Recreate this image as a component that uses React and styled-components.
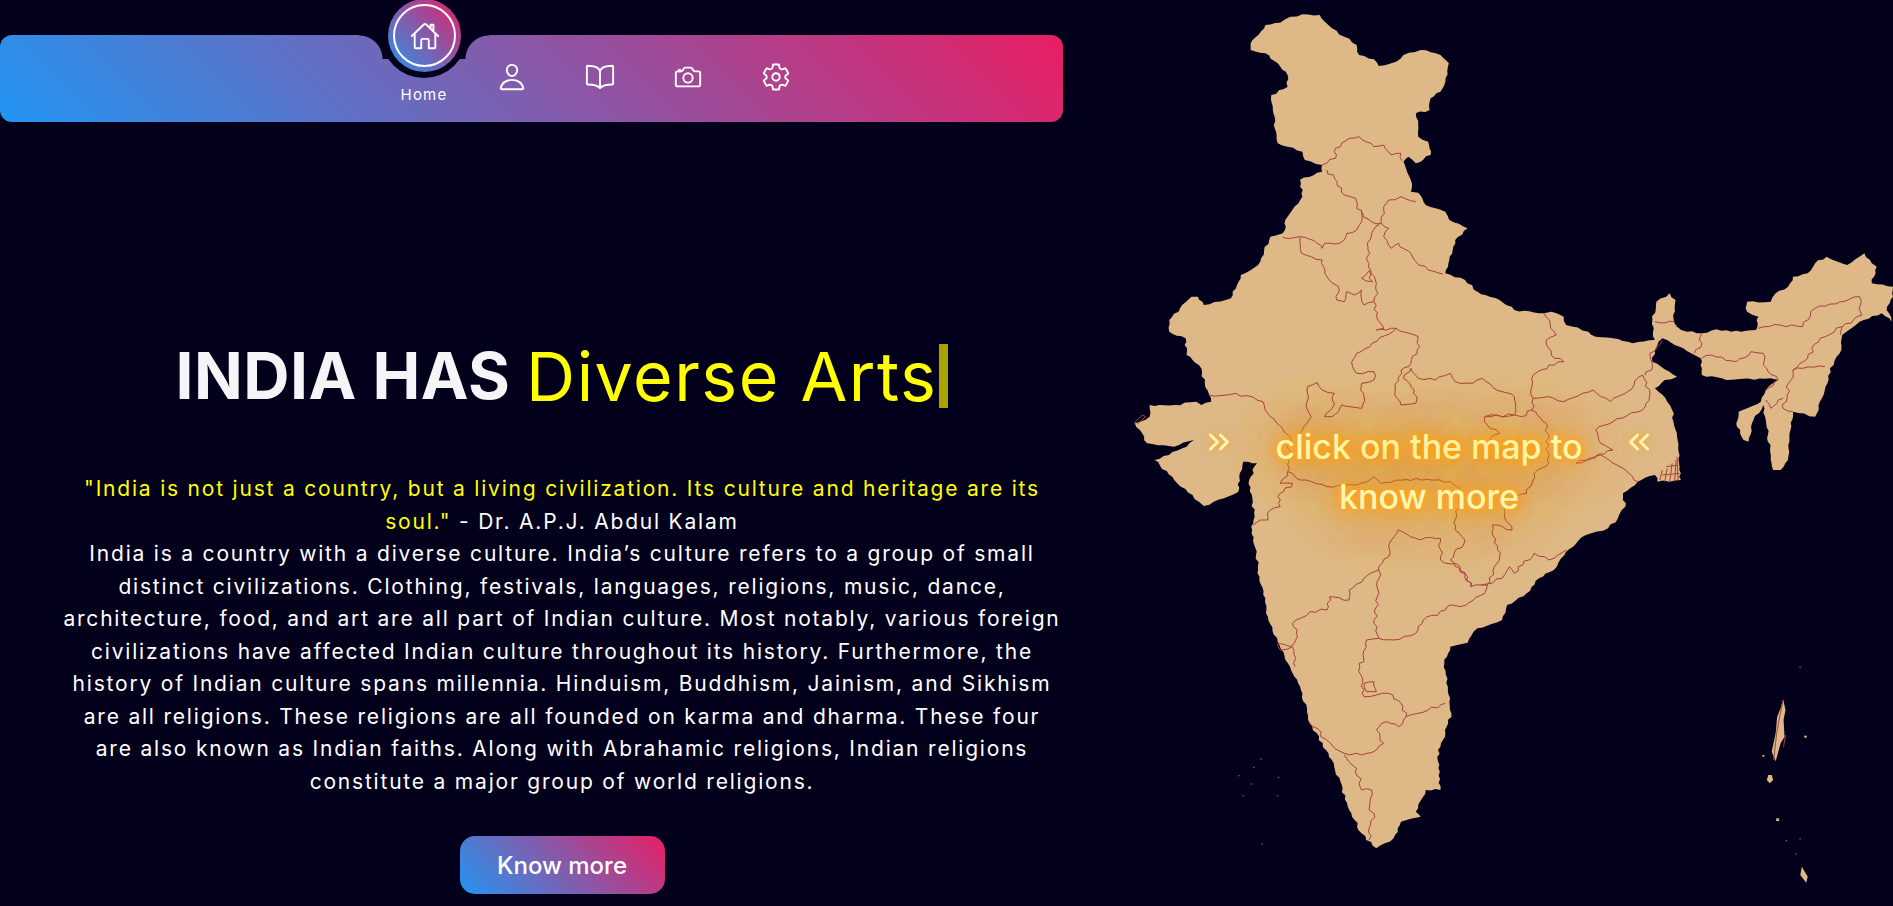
import styled, { createGlobalStyle } from "styled-components";
import {
  IoHomeOutline,
  IoPersonOutline,
  IoBookOutline,
  IoCameraOutline,
  IoSettingsOutline,
} from "react-icons/io5";
import { ChevronsLeft, ChevronsRight } from "lucide-react";

const BG = "#03001c";

const GlobalStyle = createGlobalStyle`
  html, body { margin: 0; padding: 0; background: ${BG}; overflow: hidden; }
  * { box-sizing: border-box; }
`;

const Page = styled.div`
  display: flex;
  width: 1893px;
  height: 906px;
  font-family: Inter, "Liberation Sans", sans-serif;
  color: #fff;
`;

const LeftColumn = styled.div`
  width: 1120px;
  padding-top: 35px;
`;

const Nav = styled.nav`
  position: relative;
  display: flex;
  width: 1063px;
  height: 87px;
  padding-left: 380px;
  border-radius: 12px;
  background: linear-gradient(45deg, #2196f3, #e91e63);
`;

// dark cut-out in the bar under the active item
const Notch = styled.div`
  position: absolute;
  left: 381px;
  top: -43px;
  width: 86px;
  height: 86px;
  border-radius: 50%;
  background: ${BG};
  &::before,
  &::after {
    content: "";
    position: absolute;
    top: 43px;
    width: 30px;
    height: 24px;
  }
  &::before {
    left: -22px;
    background: radial-gradient(circle at 0 100%, transparent 23px, ${BG} 24px);
  }
  &::after {
    right: -22px;
    background: radial-gradient(circle at 100% 100%, transparent 23px, ${BG} 24px);
  }
`;

const HomeBubble = styled.div`
  position: absolute;
  left: 388px;
  top: -36px;
  width: 73px;
  height: 73px;
  display: flex;
  align-items: center;
  justify-content: center;
  border-radius: 50%;
  background: linear-gradient(45deg, #2196f3, #e91e63);
  color: #fff;
  font-size: 30px;
  &::before {
    content: "";
    position: absolute;
    inset: 5px;
    border: 2px solid #fff;
    border-radius: 50%;
  }
`;

const NavItem = styled.div`
  position: relative;
  width: 88px;
  display: flex;
  flex-direction: column;
  align-items: center;
  padding-top: 27px;
  font-size: 30px;
  line-height: 30px;
  color: #fff;
  svg { display: block; }
`;

const NavLabel = styled.span`
  margin-top: 24px;
  font-size: 15px;
  line-height: 18px;
  letter-spacing: 1.2px;
`;

const Hero = styled.section`
  padding: 215px 0 0 4px;
  display: flex;
  flex-direction: column;
  align-items: center;
`;

const Title = styled.h1`
  margin: 0;
  height: 78px;
  display: flex;
  align-items: center;
  font-size: 64px;
  line-height: 78px;
  font-weight: 700;
  letter-spacing: 0.5px;
  color: #f5f5f7;
  white-space: pre;
`;

const Typed = styled.span`
  font-size: 68px;
  font-weight: 400;
  color: #ffff00;
  letter-spacing: 1.5px;
`;

const Cursor = styled.span`
  width: 9px;
  height: 64px;
  margin-left: 2px;
  background: #a8a300;
`;

const Text = styled.p`
  margin: 58px 0 0;
  text-align: center;
  font-size: 21px;
  font-weight: 400;
  line-height: 32.5px;
  letter-spacing: 1.8px;
  color: #fff;
  white-space: nowrap;
`;

const Quote = styled.span`
  color: #ffff00;
`;

const KnowMore = styled.button`
  margin-top: 38px;
  width: 205px;
  height: 58px;
  border: 0;
  border-radius: 15px;
  background: linear-gradient(45deg, #2196f3, #e91e63);
  color: #fff;
  font-family: inherit;
  font-size: 24px;
  font-weight: 500;
`;

const MapPanel = styled.div`
  position: relative;
  width: 773px;
  height: 906px;
`;

const MapDrawing = styled.svg`
  display: block;
  width: 773px;
  height: 906px;
`;

const Hint = styled.div`
  position: absolute;
  left: 82px;
  top: 422px;
  width: 454px;
  display: flex;
  justify-content: space-between;
  align-items: flex-start;
  color: #fff7b0;
  svg {
    display: block;
    margin-top: 3px;
    filter: drop-shadow(0 0 4px #ffa51f);
  }
`;

const HintText = styled.div`
  width: 340px;
  text-align: center;
  font-size: 34px;
  font-weight: 500;
  line-height: 50px;
  text-shadow: 0 0 4px #ffa51f, 0 0 8px #ffa51f, 0 0 14px #ffa51f, 0 0 24px #ffa51f,
    0 0 45px #f09a3a, 0 0 70px #f09a3a, 0 0 90px #f09a3a;
`;

// outline and borders are traced in a 1568x2718 grid, squeezed to the panel
const outline =
  "M265 130 L295 75 L325 68 L335 58 L370 43 L405 45 L430 85 L480 135 L485 165 L515 178 L525 198 L560 185 L575 165 L610 150 L650 165 L667 190 L660 245 L650 275 L630 295 L628 330 L600 340 L605 375 L605 410 L625 425 L630 465 L600 490 L585 470 L575 485 L590 540 L590 575 L605 578 L620 615 L660 635 L668 660 L705 685 L680 720 L668 780 L660 820 L700 840 L725 875 L770 900 L800 930 L860 940 L875 935 L900 950 L905 975 L950 995 L965 1010 L1000 1015 L1040 1030 L1085 1020 L1080 960 L1088 905 L1115 880 L1127 900 L1122 945 L1130 980 L1150 995 L1180 1000 L1210 988 L1240 995 L1290 990 L1295 950 L1272 935 L1272 905 L1320 905 L1330 880 L1355 860 L1365 830 L1395 820 L1410 790 L1433 770 L1475 795 L1510 760 L1525 790 L1535 800 L1525 850 L1568 860 L1568 890 L1555 930 L1565 965 L1545 940 L1500 965 L1465 1005 L1460 1060 L1440 1105 L1435 1150 L1410 1250 L1365 1235 L1360 1290 L1355 1380 L1340 1410 L1325 1410 L1310 1260 L1305 1215 L1285 1260 L1275 1325 L1265 1320 L1250 1270 L1255 1235 L1300 1205 L1310 1170 L1335 1140 L1320 1135 L1230 1140 L1180 1125 L1178 1075 L1165 1065 L1135 1040 L1100 1015 L1085 1050 L1080 1085 L1130 1130 L1105 1140 L1085 1165 L1110 1205 L1120 1230 L1130 1310 L1135 1400 L1138 1440 L1090 1445 L1085 1425 L1050 1445 L1020 1480 L1025 1520 L1010 1555 L990 1585 L945 1605 L905 1655 L880 1710 L850 1735 L825 1780 L785 1815 L775 1860 L725 1885 L705 1928 L670 1940 L658 1990 L665 2060 L672 2140 L660 2200 L645 2250 L650 2370 L620 2370 L600 2435 L610 2450 L570 2465 L555 2515 L520 2545 L490 2500 L465 2430 L430 2280 L385 2170 L370 2080 L345 2000 L320 1925 L300 1850 L283 1730 L268 1590 L272 1540 L262 1440 L278 1390 L250 1385 L243 1420 L240 1475 L170 1518 L160 1505 L110 1440 L70 1380 L135 1340 L150 1320 L110 1340 L55 1330 L45 1300 L30 1270 L60 1250 L60 1215 L110 1215 L155 1205 L165 1215 L185 1205 L160 1095 L135 1065 L133 1015 L100 995 L100 960 L145 890 L158 890 L170 915 L225 895 L245 825 L280 795 L305 710 L330 700 L340 650 L370 590 L365 540 L410 515 L410 495 L375 480 L370 455 L320 430 L310 330 L307 285 L340 260 L340 225 L320 190 L295 160 L265 150 Z";

const islands = [
  "M1345 2098 L1350 2130 L1346 2160 L1348 2210 L1340 2230 L1330 2284 L1322 2255 L1330 2200 L1333 2150 L1340 2125 Z",
  "M1315 2325 L1322 2325 L1325 2340 L1318 2350 L1312 2340 Z",
  "M1383 2600 L1395 2630 L1392 2648 L1380 2625 Z",
  "M1331 2455 h6 v8 h-6 Z",
  "M1388 2207 h5 v6 h-5 Z",
  "M1303 2265 h4 v5 h-4 Z",
];

const borders = [
  "M410 495 L437 475 L437 445 L465 415 L485 410 L515 440 L535 435 L550 465 L570 460 L572 482",
  "M420 510 L440 545 L455 585 L478 595 L480 625 L510 665 L530 670",
  "M600 605 L570 590 L545 600 L535 630 L530 670 L545 685 L535 710 L550 745 L565 730 L590 760 L600 785 L625 810 L655 822",
  "M330 712 L375 712 L400 730 L410 745 L415 730 L445 730 L460 700 L480 690 L490 665 L490 630",
  "M365 712 L368 760 L410 780 L420 830 L445 870 L440 900 L455 905 L460 875 L475 885 L490 870 L495 915 L515 905 L523 880 L520 850 L505 790 L503 750 L510 700 L527 672",
  "M490 835 L505 812 L512 845 L490 835",
  "M515 905 L520 950 L535 985 L520 990 L560 985 L605 1010 L608 1040 L590 1090 L570 1110 L558 1175 L570 1215 L600 1210 L597 1170 L575 1135 L590 1105 L605 1135 L640 1140 L670 1120 L680 1145 L715 1150 L735 1135 L775 1175 L800 1190 L800 1245 L815 1250 L835 1230",
  "M560 985 L480 1060 L470 1085 L480 1120 L515 1115 L515 1140 L490 1150 L495 1190 L490 1225 L450 1215 L430 1250 L415 1250 L435 1210 L435 1180 L410 1170 L400 1148 L380 1160 L378 1210 L388 1250 L365 1300",
  "M180 1185 L235 1180 L290 1205 L305 1250 L345 1310 L340 1415 L365 1440 L420 1460 L480 1455 L515 1430 L530 1450 L600 1435 L670 1445 L690 1465 L680 1590 L700 1620 L670 1680 L705 1730 L712 1760 L745 1755 L770 1670 L755 1575 L795 1590 L780 1540 L780 1500 L825 1480 L840 1420 L870 1390 L865 1270 L835 1230",
  "M340 1415 L325 1450 L350 1450 L320 1490 L325 1520 L305 1530 L300 1560 L285 1560 L270 1575",
  "M860 940 L885 1005 L865 1020 L875 1065 L900 1085 L870 1095 L835 1135 L838 1195 L835 1230",
  "M838 1195 L870 1190 L900 1205 L960 1170 L995 1205 L1030 1175 L1060 1125 L1075 1180 L1060 1230 L1000 1265 L965 1290 L975 1330 L1000 1350 L925 1390 L975 1365 L1040 1430 L1050 1445",
  "M740 1250 L800 1245 L740 1250 L745 1275 L770 1300 L740 1330",
  "M1100 1020 L1075 1060 L1080 1100 L1065 1125",
  "M732 1755 L775 1735 L790 1700 L800 1720 L840 1660 L870 1680 L905 1650",
  "M565 1590 L600 1615 L650 1615 L650 1680 L690 1700 L712 1760",
  "M565 1590 L545 1640 L545 1670 L525 1700 L525 1780 L515 1870 L525 1915 L555 1920 L600 1900 L615 1860 L660 1830 L670 1815 L690 1820 L740 1780 L745 1755",
  "M525 1710 L495 1735 L465 1770 L465 1800 L425 1790 L420 1830 L385 1835 L350 1870 L360 1910 L345 1940 L320 1930 L325 1950 L350 1940 L355 2000",
  "M525 1915 L500 1920 L495 1985 L485 1990 L495 2070 L495 2090 L520 2085 L545 2080 L570 2110 L580 2150 L565 2180 L540 2165 L520 2190 L535 2230 L520 2250 L490 2265 L455 2260 L430 2235 L385 2170",
  "M495 2050 L515 2045 L520 2075 L500 2075 L495 2050",
  "M580 2150 L625 2130 L660 2110",
  "M455 2265 L480 2305 L490 2370 L510 2370 L505 2430 L515 2440 L505 2520",
  "M1295 985 L1340 975 L1385 980 L1410 925 L1500 890 L1505 945 L1465 980 L1420 1015 L1395 1075 L1365 1110 L1345 1225 L1365 1235",
  "M1180 1075 L1200 1065 L1250 1085 L1280 1055 L1305 1060 L1305 1095 L1335 1140 L1310 1170",
  "M1085 965 L1125 965",
  "M1180 1000 L1180 1030 L1165 1060",
  "M1465 980 L1462 1005",
  "M1365 1110 L1385 1105 L1430 1100",
  "M1310 1200 L1320 1225 L1345 1195",
];

// sunderbans, the rann and the andaman coast, too dense to wobble
const marshes =
  "M1095 1440 L1100 1410 M1105 1445 L1110 1405 M1115 1445 L1120 1390 M1125 1445 L1128 1380 M1132 1440 L1130 1370 M1100 1425 L1135 1420 M1108 1400 L1132 1395 M28 1270 L45 1245 L52 1250 L35 1272 M1345 2100 L1338 2150 L1332 2200 L1326 2280 M1350 2205 L1346 2240";

const specks = [
  [240, 2325], [270, 2300], [285, 2275], [320, 2330], [265, 2350], [248, 2385],
  [318, 2385], [287, 2530], [1378, 2000], [1350, 2520], [1370, 2560], [1378, 2515],
];

// the source map is a noisy trace, so break the long straight runs into small wiggles
function roughen(d, amount) {
  const pts = d.match(/-?\d+(\.\d+)?/g).map(Number);
  const closed = d.trim().endsWith("Z");
  let out = `M${pts[0]} ${pts[1]}`;
  let seed = pts[0] * 7 + pts[1];
  for (let i = 2; i < pts.length; i += 2) {
    const [ax, ay, bx, by] = [pts[i - 2], pts[i - 1], pts[i], pts[i + 1]];
    const len = Math.hypot(bx - ax, by - ay);
    const steps = Math.max(1, Math.round(len / 11));
    for (let s = 1; s <= steps; s++) {
      seed += 1;
      const noise = s === steps ? 0 : Math.sin(seed * 12.9898) * 43758.5453;
      const wob = s === steps ? 0 : (noise - Math.floor(noise) - 0.5) * amount;
      const x = ax + ((bx - ax) * s) / steps - ((by - ay) / len) * wob;
      const y = ay + ((by - ay) * s) / steps + ((bx - ax) / len) * wob;
      out += ` L${x.toFixed(1)} ${y.toFixed(1)}`;
    }
  }
  return closed ? out + " Z" : out;
}

function IndiaMap() {
  return (
    <MapDrawing viewBox="0 0 1568 2718" preserveAspectRatio="none">
      <path d={roughen(outline, 6)} fill="#deb887" />
      {islands.map((d) => (
        <path key={d} d={d} fill="#deb887" />
      ))}
      {borders.map((d) => (
        <path key={d} d={roughen(d, 9)} fill="none" stroke="#a8403f" strokeWidth="1" vectorEffect="non-scaling-stroke" />
      ))}
      <path d={marshes} fill="none" stroke="#a8403f" strokeWidth="1" vectorEffect="non-scaling-stroke" />
      {specks.map(([x, y]) => (
        <rect key={x + "-" + y} x={x} y={y} width="3" height="4" fill="#a8403f" />
      ))}
    </MapDrawing>
  );
}

const navIcons = [IoPersonOutline, IoBookOutline, IoCameraOutline, IoSettingsOutline];

export default function App() {
  return (
    <Page>
      <GlobalStyle />
      <LeftColumn>
        <Nav>
          <Notch />
          <HomeBubble>
            <IoHomeOutline />
          </HomeBubble>
          <NavItem>
            <NavLabel>Home</NavLabel>
          </NavItem>
          {navIcons.map((Icon, i) => (
            <NavItem key={i}>
              <Icon />
            </NavItem>
          ))}
        </Nav>
        <Hero>
          <Title>
            {"INDIA HAS "}
            <Typed>Diverse Arts</Typed>
            <Cursor />
          </Title>
          <Text>
            <Quote>"India is not just a country, but a living civilization. Its culture and heritage are its</Quote>
            <br />
            <Quote>soul."</Quote> - Dr. A.P.J. Abdul Kalam
            <br />
            India is a country with a diverse culture. India’s culture refers to a group of small
            <br />
            distinct civilizations. Clothing, festivals, languages, religions, music, dance,
            <br />
            architecture, food, and art are all part of Indian culture. Most notably, various foreign
            <br />
            civilizations have affected Indian culture throughout its history. Furthermore, the
            <br />
            history of Indian culture spans millennia. Hinduism, Buddhism, Jainism, and Sikhism
            <br />
            are all religions. These religions are all founded on karma and dharma. These four
            <br />
            are also known as Indian faiths. Along with Abrahamic religions, Indian religions
            <br />
            constitute a major group of world religions.
          </Text>
          <KnowMore>Know more</KnowMore>
        </Hero>
      </LeftColumn>
      <MapPanel>
        <IndiaMap />
        <Hint>
          <ChevronsRight size={34} />
          <HintText>click on the map to know more</HintText>
          <ChevronsLeft size={34} />
        </Hint>
      </MapPanel>
    </Page>
  );
}
